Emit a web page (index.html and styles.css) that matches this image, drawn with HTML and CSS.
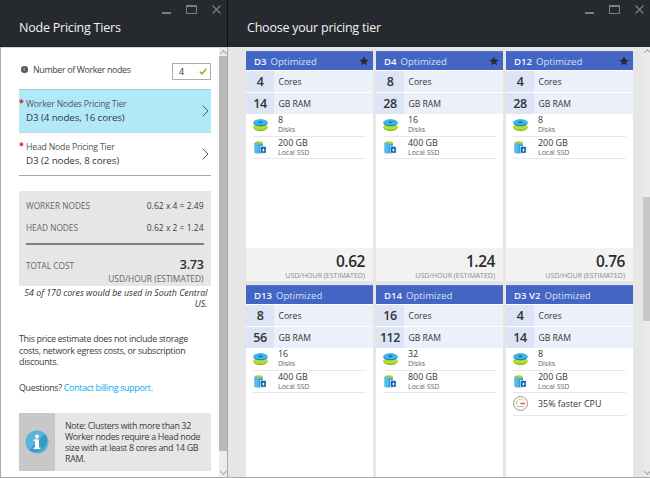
FILE: index.html
```html
<!DOCTYPE html>
<html lang="en">
<head>
<meta charset="utf-8">
<title>Node Pricing Tiers</title>
<link rel="stylesheet" href="styles.css">
</head>
<body>
<svg class="defs" width="0" height="0" aria-hidden="true">
  <defs>
    <symbol id="disk" viewBox="0 0 16 13">
      <ellipse cx="8" cy="9" rx="7.6" ry="3.6" fill="#7fb516"/>
      <ellipse cx="8" cy="8" rx="7.6" ry="3.4" fill="#b8d936"/>
      <ellipse cx="8" cy="4" rx="7.6" ry="3.6" fill="#0d86c8"/>
      <ellipse cx="8" cy="3.3" rx="7.6" ry="3.1" fill="#3db6e8"/>
      <ellipse cx="8" cy="3.3" rx="2.4" ry="1" fill="#1279b5"/>
    </symbol>
    <symbol id="ssd" viewBox="0 0 13 13">
      <path d="M.6 2h8.6v10.2a4.3 1 0 0 1-8.6 0z" fill="#2d9fdc"/>
      <ellipse cx="4.9" cy="2" rx="4.3" ry="1.7" fill="#a6ce39"/>
      <path d="M.6 2h4.3v11a4.3 1 0 0 1-4.3-.8z" fill="#59b9e8"/>
      <rect x="6.6" y="5.6" width="6" height="7" fill="#1261a8" stroke="#fff" stroke-width=".6"/>
      <rect x="9" y="8" width="1.6" height="2.8" fill="#fff"/>
    </symbol>
    <symbol id="gauge" viewBox="0 0 15 15">
      <circle cx="7.5" cy="7.5" r="7" fill="#fafafa" stroke="#9a9a9a" stroke-width="1"/>
      <path d="M3.2 8a4.3 4.3 0 0 1 1.8-3.6" fill="none" stroke="#8fc31f" stroke-width="1.2" stroke-dasharray="1 .7"/>
      <path d="M5.8 3.6a4.3 4.3 0 0 1 4 .2" fill="none" stroke="#e8b321" stroke-width="1.2" stroke-dasharray="1 .7"/>
      <path d="M7.5 7.5h4.6" stroke="#e2572b" stroke-width="1.4"/>
      <path d="M4 10.5h7" stroke="#bbb" stroke-width="1"/>
    </symbol>
    <symbol id="star" viewBox="0 0 12 12">
      <path d="M6 .6l1.6 3.7 4 .35-3 2.65.9 3.9L6 9.1 2.5 11.2l.9-3.9-3-2.65 4-.35z" fill="#262a2e"/>
    </symbol>
    <symbol id="chev" viewBox="0 0 7 12">
      <path d="M.8.7l5.2 5.3-5.2 5.3" fill="none" stroke="#555" stroke-width="1"/>
    </symbol>
  </defs>
</svg>
<div class="desktop">
  <section class="blade blade-left">
    <header class="blade-head">
      <div class="controls">
        <span class="ctl-min"></span>
        <span class="ctl-max"></span>
        <svg class="ctl-x" viewBox="0 0 9 9"><path d="M.5.5l8 8M8.5.5l-8 8" stroke="#7c7f82" stroke-width="1.1"/></svg>
      </div>
      <h1>Node Pricing Tiers</h1>
    </header>
    <div class="blade-scroll">
      <div class="blade-body">
        <div class="workers">
          <span class="info-dot">i</span>
          <span class="workers-label">Number of Worker nodes</span>
          <span class="num-box"><span>4</span><svg class="tick" viewBox="0 0 8 7"><path d="M.7 3.6l2.3 2.3L7.3.8" fill="none" stroke="#7fba00" stroke-width="1.4"/></svg></span>
        </div>
        <div class="tier tier-active">
          <div>
            <div class="tier-label"><b class="req">*</b>Worker Nodes Pricing Tier</div>
            <div class="tier-value">D3 (4 nodes, 16 cores)</div>
          </div>
          <svg class="chev"><use href="#chev"/></svg>
        </div>
        <div class="tier tier-plain">
          <div>
            <div class="tier-label"><b class="req">*</b>Head Node Pricing Tier</div>
            <div class="tier-value">D3 (2 nodes, 8 cores)</div>
          </div>
          <svg class="chev"><use href="#chev"/></svg>
        </div>
        <div class="costs">
          <div class="cost-row"><span>WORKER NODES</span><span class="calc">0.62 x 4 = 2.49</span></div>
          <div class="cost-row"><span>HEAD NODES</span><span class="calc">0.62 x 2 = 1.24</span></div>
          <div class="cost-rule"></div>
          <div class="cost-row total"><span>TOTAL COST</span><strong>3.73</strong></div>
          <div class="cost-unit">USD/HOUR (ESTIMATED)</div>
        </div>
        <p class="usage">54 of 170 cores would be used in South Central US.</p>
        <p class="para first">This price estimate does not include storage costs, network egress costs, or subscription discounts.</p>
        <p class="para second">Questions? <a href="#">Contact billing support.</a></p>
        <div class="note">
          <div class="note-icon">
            <svg viewBox="0 0 24 24" width="24" height="24"><circle cx="12" cy="12" r="11.5" fill="#59b4d9"/><path d="M20 4a11.5 11.5 0 0 1-16 16z" fill="#3999c6"/><rect x="10" y="9.5" width="4" height="9" fill="#fff"/><rect x="8.5" y="17.5" width="7" height="1.6" fill="#fff"/><rect x="8.5" y="9.5" width="3" height="1.5" fill="#fff"/><circle cx="12" cy="6.5" r="2" fill="#fff"/></svg>
          </div>
          <div class="note-text">Note: Clusters with more than 32 Worker nodes require a Head node size with at least 8 cores and 14 GB RAM.</div>
        </div>
      </div>
      <div class="scrollbar sb-left"><i class="sb-up"></i><i class="sb-thumb"></i><i class="sb-rest"></i><i class="sb-down"></i></div>
    </div>
  </section>
  <section class="blade blade-right">
    <header class="blade-head">
      <div class="controls">
        <span class="ctl-min"></span>
        <span class="ctl-max"></span>
        <svg class="ctl-x" viewBox="0 0 9 9"><path d="M.5.5l8 8M8.5.5l-8 8" stroke="#7c7f82" stroke-width="1.1"/></svg>
      </div>
      <h1>Choose your pricing tier</h1>
    </header>
    <div class="blade-scroll">
      <div class="cards">
        <article class="card">
          <div class="card-head"><b>D3</b><span>Optimized</span><svg class="star"><use href="#star"/></svg></div>
          <div class="spec"><b>4</b><span>Cores</span></div>
          <div class="spec"><b>14</b><span>GB RAM</span></div>
          <div class="feat"><svg class="fi"><use href="#disk"/></svg><div><div class="f1">8</div><div class="f2">Disks</div></div></div>
          <div class="feat"><svg class="fi fi-ssd"><use href="#ssd"/></svg><div><div class="f1">200 GB</div><div class="f2">Local SSD</div></div></div>
          <div class="price"><strong>0.62</strong><span>USD/HOUR (ESTIMATED)</span></div>
        </article>
        <article class="card">
          <div class="card-head"><b>D4</b><span>Optimized</span><svg class="star"><use href="#star"/></svg></div>
          <div class="spec"><b>8</b><span>Cores</span></div>
          <div class="spec"><b>28</b><span>GB RAM</span></div>
          <div class="feat"><svg class="fi"><use href="#disk"/></svg><div><div class="f1">16</div><div class="f2">Disks</div></div></div>
          <div class="feat"><svg class="fi fi-ssd"><use href="#ssd"/></svg><div><div class="f1">400 GB</div><div class="f2">Local SSD</div></div></div>
          <div class="price"><strong>1.24</strong><span>USD/HOUR (ESTIMATED)</span></div>
        </article>
        <article class="card">
          <div class="card-head"><b>D12</b><span>Optimized</span><svg class="star"><use href="#star"/></svg></div>
          <div class="spec"><b>4</b><span>Cores</span></div>
          <div class="spec"><b>28</b><span>GB RAM</span></div>
          <div class="feat"><svg class="fi"><use href="#disk"/></svg><div><div class="f1">8</div><div class="f2">Disks</div></div></div>
          <div class="feat"><svg class="fi fi-ssd"><use href="#ssd"/></svg><div><div class="f1">200 GB</div><div class="f2">Local SSD</div></div></div>
          <div class="price"><strong>0.76</strong><span>USD/HOUR (ESTIMATED)</span></div>
        </article>
        <article class="card">
          <div class="card-head"><b>D13</b><span>Optimized</span></div>
          <div class="spec"><b>8</b><span>Cores</span></div>
          <div class="spec"><b>56</b><span>GB RAM</span></div>
          <div class="feat"><svg class="fi"><use href="#disk"/></svg><div><div class="f1">16</div><div class="f2">Disks</div></div></div>
          <div class="feat"><svg class="fi fi-ssd"><use href="#ssd"/></svg><div><div class="f1">400 GB</div><div class="f2">Local SSD</div></div></div>
        </article>
        <article class="card">
          <div class="card-head"><b>D14</b><span>Optimized</span></div>
          <div class="spec"><b>16</b><span>Cores</span></div>
          <div class="spec"><b>112</b><span>GB RAM</span></div>
          <div class="feat"><svg class="fi"><use href="#disk"/></svg><div><div class="f1">32</div><div class="f2">Disks</div></div></div>
          <div class="feat"><svg class="fi fi-ssd"><use href="#ssd"/></svg><div><div class="f1">800 GB</div><div class="f2">Local SSD</div></div></div>
        </article>
        <article class="card">
          <div class="card-head"><b>D3 V2</b><span>Optimized</span></div>
          <div class="spec"><b>4</b><span>Cores</span></div>
          <div class="spec"><b>14</b><span>GB RAM</span></div>
          <div class="feat"><svg class="fi"><use href="#disk"/></svg><div><div class="f1">8</div><div class="f2">Disks</div></div></div>
          <div class="feat"><svg class="fi fi-ssd"><use href="#ssd"/></svg><div><div class="f1">200 GB</div><div class="f2">Local SSD</div></div></div>
          <div class="feat"><svg class="fi fi-gauge"><use href="#gauge"/></svg><div><div class="f1">35% faster CPU</div></div></div>
        </article>
      </div>
      <div class="scrollbar sb-right"><i class="sb-up"></i><i class="sb-space"></i><i class="sb-thumb"></i><i class="sb-rest"></i><i class="sb-down"></i></div>
    </div>
  </section>
</div>
</body>
</html>
```
FILE: styles.css
```css
* { box-sizing: border-box; }
html, body { margin: 0; padding: 0; }
body {
  width: 650px; height: 478px; overflow: hidden;
  font-family: "Open Sans", "Noto Sans", sans-serif;
  font-size: 9px; color: #3a3a3a; background: #fff;
}
.defs { position: absolute; }
.desktop { display: flex; height: 478px; border-bottom: 1px solid #a9a9a9; }
.blade { display: flex; flex-direction: column; height: 477px; }
.blade-left { width: 228px; border-right: 1px solid #a9a9a9; border-left: 1px solid #a9a9a9; }
.blade-right { flex: 1; background: #e6e6e6; }
.blade-head {
  height: 47px; background: #262a2e; color: #f2f2f2; flex: none;
  display: flex; flex-direction: column; position: relative;
}
.blade-left .blade-head { margin-left: -1px; margin-right: -1px; border-right: 1px solid #0e0f10; }
.blade-head h1 { margin: 0; font-size: 12.5px; font-weight: 400; line-height: 16px; padding: 20px 0 0 19px; letter-spacing: -.22px; }
.controls { position: absolute; top: 5px; right: 6px; display: flex; align-items: flex-start; gap: 15px; }
.ctl-min { width: 9px; height: 2px; background: #7c7f82; margin-top: 7px; }
.ctl-max { width: 11px; height: 9px; border: 1px solid #7c7f82; border-top-width: 2px; }
.ctl-x { width: 9px; height: 9px; }
.blade-scroll { flex: 1; display: flex; min-height: 0; }
.blade-left .blade-scroll { border-top: 1px solid #d5d5d5; }
.blade-body { flex: 1; padding: 0 8px 0 18px; min-width: 0; }
.scrollbar { flex: none; display: flex; flex-direction: column; }
.sb-left { width: 8.5px; background: #ececec; }
.sb-up, .sb-down { height: 8px; flex: none; position: relative; }
.sb-up::after, .sb-down::after {
  content: ""; position: absolute; left: 2px; width: 4px; height: 4px;
  border-left: 1px solid #a5a5a5; border-top: 1px solid #a5a5a5; transform: rotate(45deg); top: 3px;
}
.sb-down::after { transform: rotate(225deg); top: 0; }
.sb-left .sb-thumb { height: 395px; flex: none; background: #bababa; }
.sb-rest { flex: 1; }
.workers { display: flex; align-items: center; height: 18px; margin-top: 14px; }
.info-dot {
  width: 6.5px; height: 6.5px; border-radius: 50%; background: #5a5a5a; color: #fff; font-size: 5px;
  display: flex; align-items: center; justify-content: center; line-height: 1; margin: 0 5.5px 3px 2px;
}
.workers-label { flex: 1; font-size: 8.9px; margin-bottom: 3px; color: #444; letter-spacing: -.36px; }
.num-box {
  width: 38.5px; height: 17px; border: 1px solid #adadad; background: #fff; display: flex; align-items: center;
  justify-content: space-between; padding: 0 3px 0 6px; font-size: 9px; color: #333;
}
.tick { width: 8px; height: 7px; }
.tier { display: flex; align-items: center; justify-content: space-between; padding-left: 7px; padding-right: 2px; }
.tier-active { height: 44px; margin-top: 9px; background: #b2e9f9; border-top: 1px solid #a8c9d4; border-bottom: 1px solid #c9d6da; }
.tier-plain { height: 43px; border-bottom: 1px solid #a5a5a5; }
.tier-label { font-size: 8.7px; color: #4a5a62; line-height: 12px; position: relative; letter-spacing: -.2px; }
.tier-plain .tier-label { color: #555; }
.req { position: absolute; left: -7px; top: -1px; color: #e81123; font-weight: 700; font-size: 9px; }
.tier-value { font-size: 9.8px; color: #2e3a40; line-height: 15px; letter-spacing: -.1px; }
.chev { width: 7px; height: 12px; }
.costs { margin-top: 15px; background: #e6e6e6; padding: 8px 7px 0; height: 95px; }
.cost-row { display: flex; justify-content: space-between; align-items: baseline; font-size: 8.3px; color: #666; height: 22px; line-height: 14px; }
.calc { color: #3c3c3c; font-size: 8.5px; }
.cost-rule { height: 2px; background: #7f7f7f; margin: 0 0 11px; }
.cost-row.total { height: 17px; line-height: 17px; }
.cost-row strong { font-size: 12.5px; font-weight: 600; color: #2c2c2c; letter-spacing: -.3px; }
.cost-unit { text-align: right; font-size: 8.4px; color: #666; line-height: 12px; }
.usage { margin: 1.5px 0 0; padding: 0 3px 0 4px; font-style: italic; text-align: right; font-size: 8.85px; line-height: 11.5px; color: #333; }
.para { margin: 0; font-size: 8.9px; line-height: 11.5px; color: #3a3a3a; letter-spacing: -.3px; }
.para.first { margin-top: 22.5px; }
.para.second { margin-top: 14px; }
.para a { color: #00abec; text-decoration: none; }
.note { display: flex; margin-top: 20px; height: 58px; background: #e6e6e6; }
.note-icon { width: 36px; flex: none; background: #c8c8c8; display: flex; align-items: center; justify-content: center; }
.note-text { flex: 1; padding: 7px 4px 0 10px; font-size: 8.9px; line-height: 11px; color: #3a3a3a; letter-spacing: -.33px; }
.cards {
  flex: 1; display: grid; grid-template-columns: repeat(3, 126.5px); column-gap: 3.5px; row-gap: 4px;
  grid-template-rows: 230px 1fr; padding: 4px 0 0 18px; min-width: 0;
}
.card { background: #fff; display: flex; flex-direction: column; }
.card-head {
  height: 19px; background: #4465c4; color: #d6e0f5; display: flex; align-items: center;
  padding: 0 4px 0 8px; font-size: 9.6px; border-top: 1px solid #5776cf;
}
.card-head b { color: #f3f6fd; font-weight: 600; margin-right: 4px; }
.star { width: 10px; height: 10px; margin-left: auto; }
.spec { display: flex; height: 21px; margin-top: 1px; background: #ecf0fa; align-items: center; font-size: 8.6px; color: #333; }
.spec b {
  width: 28px; height: 100%; background: #dde4f5; display: flex; align-items: center; justify-content: center;
  font-size: 12.5px; font-weight: 600; color: #333; margin-right: 4.5px; letter-spacing: -.4px;
}
.feat {
  display: flex; align-items: center; height: 22.5px; margin: 0 7px; border-bottom: 1px solid #e4e8f0; gap: 10px;
}
.fi { width: 15px; height: 12.5px; flex: none; }
.fi-ssd { width: 12.5px; height: 12.5px; margin: 0 1.25px; }
.fi-gauge { width: 15px; height: 15px; }
.f1 { font-size: 8.9px; line-height: 10px; color: #333; }
.f2 { font-size: 7px; line-height: 9px; color: #666; }
.price {
  margin-top: auto; height: 33px; background: #f2f2f2; text-align: right; padding: 4px 7.5px 0;
  display: flex; flex-direction: column;
}
.price strong { font-size: 15.5px; line-height: 19px; font-weight: 600; color: #2a2a2a; letter-spacing: -.45px; }
.price span { font-size: 7px; line-height: 9px; color: #8a8a8a; }
.sb-right { width: 7.3px; background: #eaeaea; }
.sb-space { height: 142px; flex: none; }
.sb-right .sb-thumb { height: 124px; flex: none; background: #c8c8c8; }
```
